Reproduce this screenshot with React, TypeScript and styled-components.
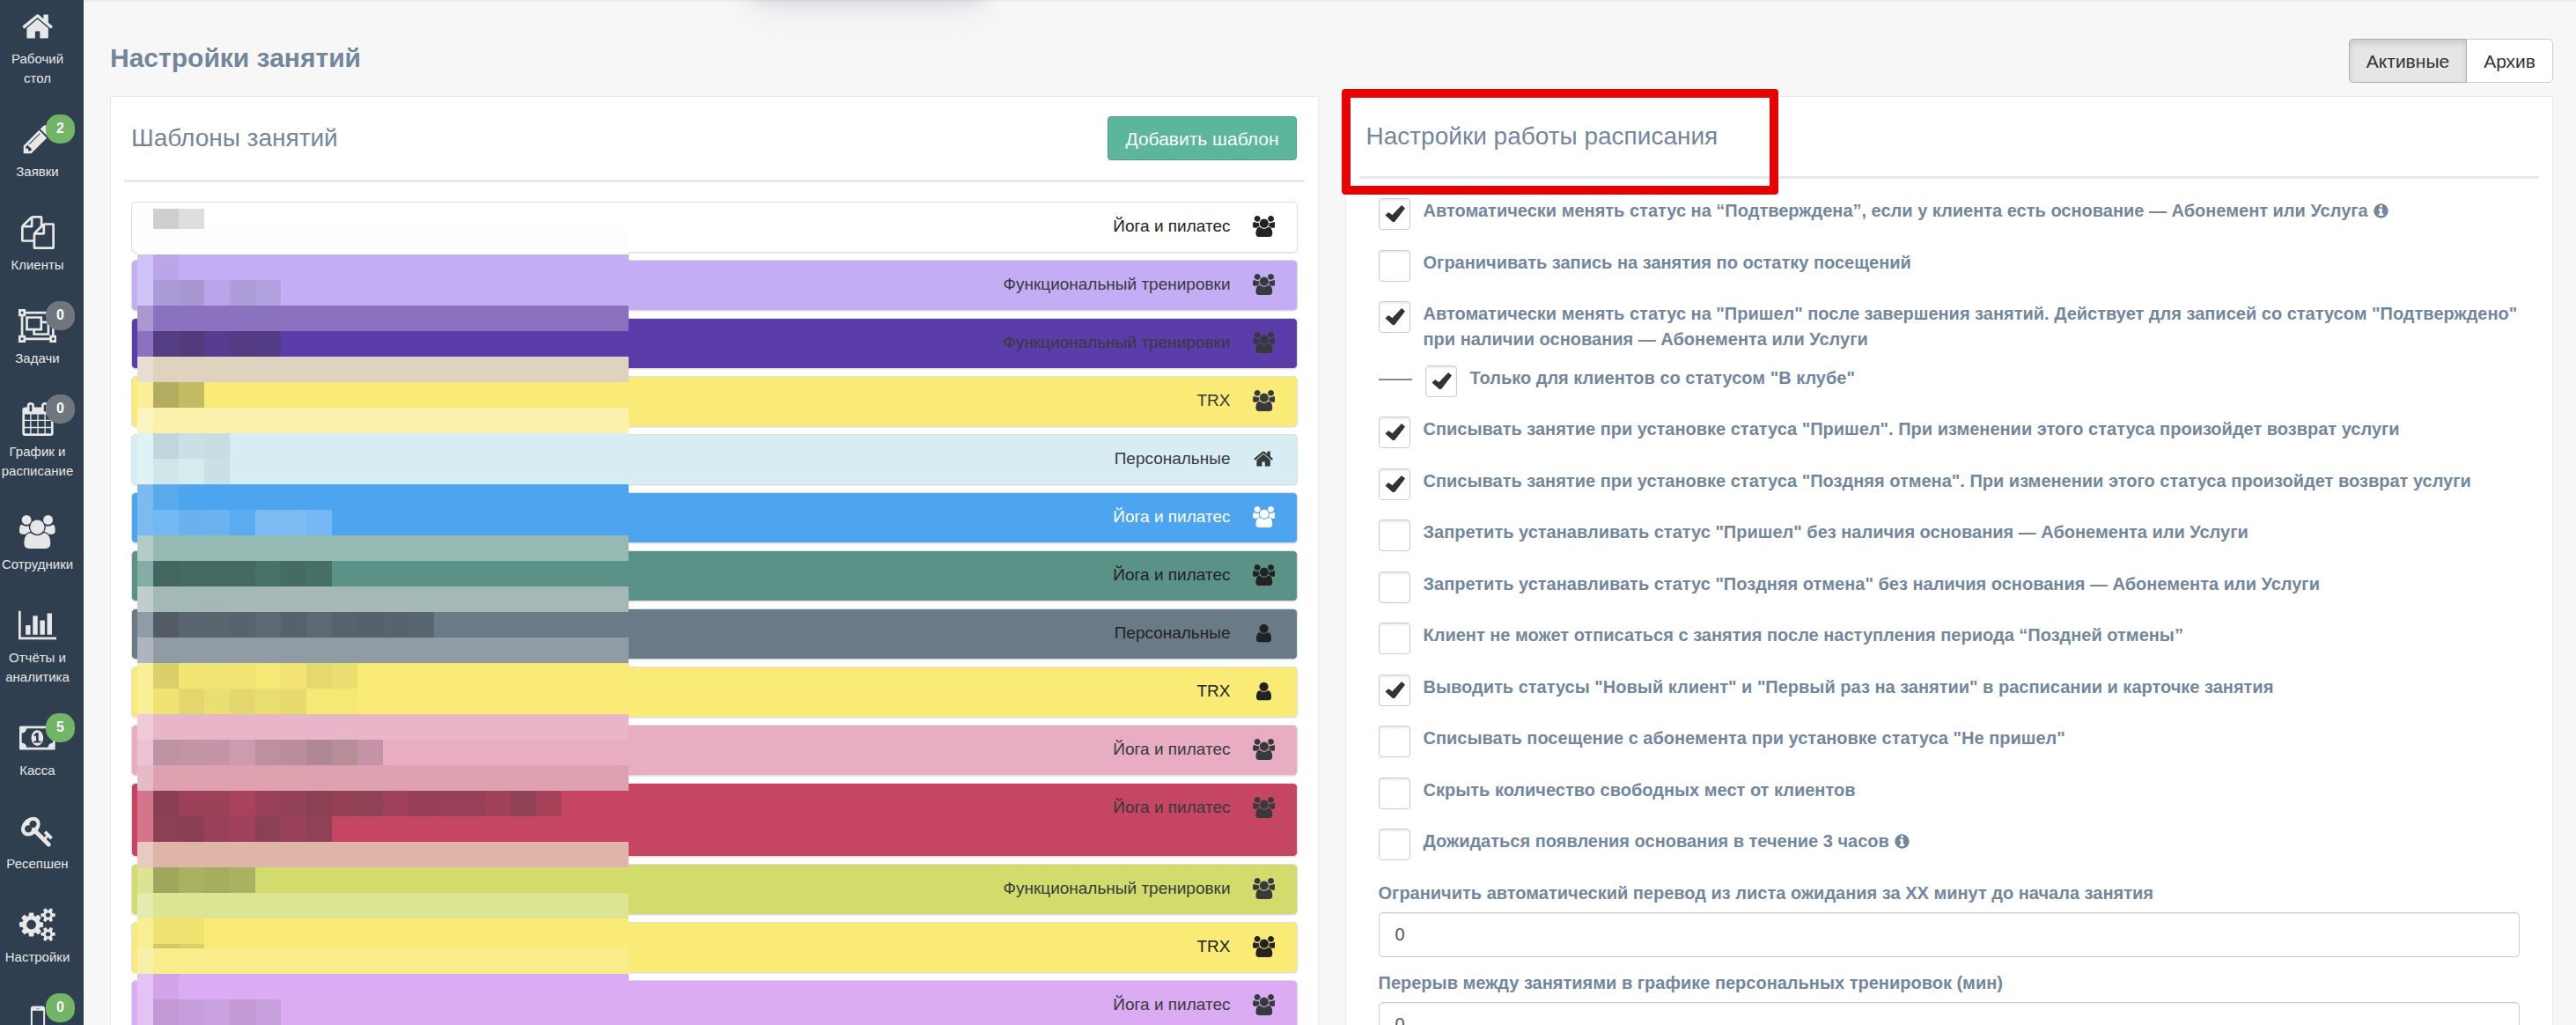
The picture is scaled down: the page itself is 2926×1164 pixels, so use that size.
import React from "react";
import styled, { createGlobalStyle, css } from "styled-components";

/* ---------- icons ---------- */

const glyphs = {
  home: {
    w: 1664,
    d: "M1408 992v480q0 26-19 45t-45 19h-384v-384h-256v384h-384q-26 0-45-19t-19-45v-480q0-1 .5-3t.5-3l575-474 575 474q1 2 1 6zm223-69l-62 74q-8 9-21 11h-3q-13 0-21-7l-692-577-692 577q-12 8-24 7-13-2-21-11l-62-74q-8-10-7-23.5t11-21.5l719-599q32-26 76-26t76 26l244 204v-195q0-14 9-23t23-9h192q14 0 23 9t9 23v408l219 182q10 8 11 21.5t-7 23.5z",
  },
  pencil: {
    w: 1792,
    d: "M491 1536l91-91-235-235-91 91v107h128v128h107zm523-928q0-22-22-22-10 0-17 7l-542 542q-7 7-7 17 0 22 22 22 10 0 17-7l542-542q7-7 7-17zm-54-192l416 416-832 832h-416v-416zm683 96q0 53-37 90l-166 166-416-416 166-165q36-38 90-38 53 0 91 38l235 234q37 39 37 91z",
  },
  files: {
    w: 1792,
    d: "M1696 384q40 0 68 28t28 68v1216q0 40-28 68t-68 28h-960q-40 0-68-28t-28-68v-288h-544q-40 0-68-28t-28-68v-672q0-40 20-88t48-76l408-408q28-28 76-48t88-20h416q40 0 68 28t28 68v328q68-40 128-40h416zm-544 213l-299 299h299v-299zm-640-384l-299 299h299v-299zm196 647l316-316v-416h-384v416q0 40-28 68t-68 28h-416v640h512v-256q0-40 20-88t48-76zm956 804v-1152h-384v416q0 40-28 68t-68 28h-416v640h896z",
  },
  group: {
    w: 2048,
    d: "M0 0h384v128h1280v-128h384v384h-128v1024h128v384h-384v-128h-1280v128h-384v-384h128v-1024h-128zM128 128v128h128v-128zM1792 128v128h128v-128zM128 1536v128h128v-128zM1792 1536v128h128v-128zM384 256v128h-128v1024h128v128h1280v-128h128v-1024h-128v-128zM384 384h896v256h384v768h-896v-256h-384zM512 512v512h640v-512zM1280 768v384h-384v128h640v-512z",
  },
  calendar: {
    w: 1792,
    d: "M192 1664h288v-288h-288v288zm352 0h320v-288h-320v288zm-352-352h288v-320h-288v320zm352 0h320v-320h-320v320zm-352-384h288v-288h-288v288zm736 736h320v-288h-320v288zm-384-736h320v-288h-320v288zm768 736h288v-288h-288v288zm-384-352h320v-320h-320v320zm-352-864v-288q0-13-9.5-22.5t-22.5-9.5h-64q-13 0-22.5 9.5t-9.5 22.5v288q0 13 9.5 22.5t22.5 9.5h64q13 0 22.5-9.5t9.5-22.5zm736 864h288v-320h-288v320zm-384-384h320v-288h-320v288zm384 0h288v-288h-288v288zm32-480v-288q0-13-9.5-22.5t-22.5-9.5h-64q-13 0-22.5 9.5t-9.5 22.5v288q0 13 9.5 22.5t22.5 9.5h64q13 0 22.5-9.5t9.5-22.5zm384-64v1280q0 52-38 90t-90 38h-1408q-52 0-90-38t-38-90v-1280q0-52 38-90t90-38h128v-96q0-66 47-113t113-47h64q66 0 113 47t47 113v96h384v-96q0-66 47-113t113-47h64q66 0 113 47t47 113v96h128q52 0 90 38t38 90z",
  },
  users: {
    w: 1920,
    d: "M593 896q-162 5-265 128H194q-82 0-138-40.5T0 865q0-353 124-353 6 0 43.5 21t97.5 42.5T384 597q67 0 133-23-5 37-5 66 0 139 81 256zm1071 637q0 120-73 189.5t-194 69.5H523q-121 0-194-69.5T256 1533q0-53 3.5-103.5t14-109T300 1212t43-97.5 62-81 85.5-53.5T602 960q10 0 43 21.5t73 48 107 48 135 21.5 135-21.5 107-48 73-48 43-21.5q61 0 111.5 20t85.5 53.5 62 81 43 97.5 26.5 108.5 14 109 3.5 103.5zM640 256q0 106-75 181t-181 75-181-75-75-181 75-181T384 0t181 75 75 181zm704 384q0 159-112.5 271.5T960 1024 688.5 911.5 576 640t112.5-271.5T960 256t271.5 112.5T1344 640zm576 225q0 78-56 118.5t-138 40.5h-134q-103-123-265-128 81-117 81-256 0-29-5-66 66 23 133 23 59 0 119-21.5t97.5-42.5 43.5-21q124 0 124 353zm-128-609q0 106-75 181t-181 75-181-75-75-181 75-181 181-75 181 75 75 181z",
  },
  user: {
    w: 1280,
    d: "M1280 1399q0 109-62.5 187t-150.5 78H213q-88 0-150.5-78T0 1399q0-85 8.5-160.5t31.5-152 58.5-131 94-89T327 832q131 128 313 128t313-128q76 0 134.5 34.5t94 89 58.5 131 31.5 152 8.5 160.5zm-256-887q0 159-112.5 271.5T640 896 368.5 783.5 256 512t112.5-271.5T640 128t271.5 112.5T1024 512z",
  },
  chart: {
    w: 2048,
    d: "M640 896v512h-256v-512h256zm384-512v1024h-256v-1024h256zm1024 1152v128h-2048v-1536h128v1408h1920zm-640-896v768h-256v-768h256zm384-384v1152h-256v-1152h256z",
  },
  money: {
    w: 1920,
    d: "M768 1152h384v-96h-128v-448h-114l-148 137 77 80q42-37 55-57h2v288h-128v96zm512-256q0 70-21 142t-59.5 134-101.5 101-138 39-138-39-101.5-101-59.5-134-21-142 21-142 59.5-134 101.5-101 138-39 138 39 101.5 101 59.5 134 21 142zm512 256v-512q-106 0-181-75t-75-181h-1152q0 106-75 181t-181 75v512q106 0 181 75t75 181h1152q0-106 75-181t181-75zm128-832v1152q0 26-19 45t-45 19h-1792q-26 0-45-19t-19-45v-1152q0-26 19-45t45-19h1792q26 0 45 19t19 45z",
  },
  key: {
    w: 1792,
    d: "M832 512q0-80-56-136t-136-56-136 56-56 136q0 42 19 83-41-19-83-19-80 0-136 56t-56 136 56 136 136 56 136-56 56-136q0-42-19-83 41 19 83 19 80 0 136-56t56-136zm851 704q0 17-49 66t-66 49q-9 0-28.5-16t-36.5-33-38.5-40-24.5-26l-96 96 220 220q28 28 28 68 0 42-39 81t-81 39q-40 0-68-28l-671-671q-176 131-365 131-163 0-265.5-102.5t-102.5-265.5q0-160 95-313t248-248 313-95q163 0 265.5 102.5t102.5 265.5q0 189-131 365l355 355 96-96q-3-3-26-24.5t-40-38.5-33-36.5-16-28.5q0-17 49-66t66-49q13 0 23 10 6 6 46 44.5t82 79.5 86.5 86 73 78 28.5 41z",
  },
  cogs: {
    w: 1920,
    d: "M896 896q0-106-75-181t-181-75-181 75-75 181 75 181 181 75 181-75 75-181zm768 512q0-52-38-90t-90-38-90 38-38 90q0 53 37.5 90.5t90.5 37.5 90.5-37.5 37.5-90.5zm0-1024q0-52-38-90t-90-38-90 38-38 90q0 53 37.5 90.5t90.5 37.5 90.5-37.5 37.5-90.5zm-384 421v185q0 10-7 19.5t-16 10.5l-155 24q-11 35-32 76 34 48 90 115 7 11 7 20 0 12-7 19-23 30-82.5 89.5t-78.5 59.5q-11 0-21-7l-115-90q-37 19-77 31-11 108-23 155-7 24-30 24h-186q-11 0-20-7.5t-10-17.5l-23-153q-34-10-75-31l-118 89q-7 7-20 7-11 0-21-8-144-133-144-160 0-9 7-19 10-14 41-53t47-61q-23-44-35-82l-152-24q-10-1-17-9.5t-7-19.5v-185q0-10 7-19.5t16-10.5l155-24q11-35 32-76-34-48-90-115-7-11-7-20 0-12 7-20 22-30 82-89t79-59q11 0 21 7l115 90q34-18 77-32 11-108 23-154 7-24 30-24h186q11 0 20 7.5t10 17.5l23 153q34 10 75 31l118-89q8-7 20-7 11 0 21 8 144 133 144 160 0 8-7 19-12 16-42 54t-45 60q23 48 34 82l152 23q10 2 17 10.5t7 19.5zm640 533v140q0 16-149 31-12 27-30 52 51 113 51 138 0 4-4 7-122 71-124 71-8 0-46-47t-52-68q-20 2-30 2t-30-2q-14 21-52 68t-46 47q-2 0-124-71-4-3-4-7 0-25 51-138-18-25-30-52-149-15-149-31v-140q0-16 149-31 13-29 30-52-51-113-51-138 0-4 4-7 4-2 35-20t59-34 30-16q8 0 46 46.5t52 67.5q20-2 30-2t30 2q51-71 92-112l6-2q4 0 124 70 4 3 4 7 0 25-51 138 17 23 30 52 149 15 149 31zm0-1024v140q0 16-149 31-12 27-30 52 51 113 51 138 0 4-4 7-122 71-124 71-8 0-46-47t-52-68q-20 2-30 2t-30-2q-14 21-52 68t-46 47q-2 0-124-71-4-3-4-7 0-25 51-138-18-25-30-52-149-15-149-31v-140q0-16 149-31 13-29 30-52-51-113-51-138 0-4 4-7 4-2 35-20t59-34 30-16q8 0 46 46.5t52 67.5q20-2 30-2t30 2q51-71 92-112l6-2q4 0 124 70 4 3 4 7 0 25-51 138 17 23 30 52 149 15 149 31z",
  },
  mobile: {
    w: 1792,
    d: "M976 1408q0-33-23.5-56.5t-56.5-23.5-56.5 23.5-23.5 56.5 23.5 56.5 56.5 23.5 56.5-23.5 23.5-56.5zm208-160v-704q0-13-9.5-22.5t-22.5-9.5h-512q-13 0-22.5 9.5t-9.5 22.5v704q0 13 9.5 22.5t22.5 9.5h512q13 0 22.5-9.5t9.5-22.5zm-192-848q0-16-16-16h-160q-16 0-16 16t16 16h160q16 0 16-16zm288-16v1024q0 52-38 90t-90 38h-512q-52 0-90-38t-38-90v-1024q0-52 38-90t90-38h512q52 0 90 38t38 90z",
  },
  info: {
    w: 1792,
    d: "M1152 1376v-160q0-14-9-23t-23-9h-96v-512q0-14-9-23t-23-9h-320q-14 0-23 9t-9 23v160q0 14 9 23t23 9h96v320h-96q-14 0-23 9t-9 23v160q0 14 9 23t23 9h448q14 0 23-9t9-23zm-128-896v-160q0-14-9-23t-23-9h-192q-14 0-23 9t-9 23v160q0 14 9 23t23 9h192q14 0 23-9t9-23zm640 416q0 209-103 385.5t-279.5 279.5-385.5 103-385.5-103-279.5-279.5-103-385.5 103-385.5 279.5-279.5 385.5-103 385.5 103 279.5 279.5 103 385.5z",
  },
};

type GlyphName = keyof typeof glyphs;

function Icon({ name, size }: { name: GlyphName; size: number }) {
  const g = glyphs[name];
  return (
    <svg height={size} viewBox={`0 0 ${g.w} 1792`} fill="currentColor" fillRule="evenodd" aria-hidden="true">
      <path d={g.d} />
    </svg>
  );
}

/* ---------- page frame ---------- */

const GlobalStyle = createGlobalStyle`
  *, *::before, *::after { box-sizing: border-box; }
  body {
    margin: 0;
    background: #f7f7f7;
    font-family: "Liberation Sans", Arial, sans-serif;
    font-size: 20px;
    line-height: 29px;
    color: #73879c;
  }
  h1, h2, p, ul { margin: 0; padding: 0; }
  ul { list-style: none; }
  button, input { font: inherit; }
`;

const Shell = styled.div`
  display: flex;
  height: 100vh;
  overflow: hidden;
`;

const Sidebar = styled.nav`
  flex: none;
  width: 95px;
  padding: 11px 10px 0 0;
  overflow: hidden;
  background: #2f3f50;
`;

const SideItem = styled.li`
  position: relative;
  margin-bottom: 39px;
`;

const SideLink = styled.a`
  display: flex;
  flex-direction: column;
  align-items: center;
  gap: 7px;
  color: #e7e7e7;
  font-size: 15px;
  line-height: 22px;
  text-align: center;
  text-decoration: none;
  white-space: pre-line;
`;

const Badge = styled.span<{ $muted: boolean }>`
  position: absolute;
  top: -9px;
  right: 0;
  width: 33px;
  height: 33px;
  border-radius: 15px;
  background: ${(p) => (p.$muted ? "#6f767d" : "#73b566")};
  color: #fff;
  font-size: 16px;
  font-weight: 700;
  line-height: 32px;
  text-align: center;
`;

const Main = styled.main`
  position: relative;
  flex: 1;
  min-width: 0;
  padding: 42px 26px 0 30px;
  border-top: 2px solid #ededed;
`;

const TopShade = styled.div`
  position: absolute;
  top: -66px;
  left: 760px;
  width: 260px;
  height: 60px;
  border-radius: 8px;
  box-shadow:
    0 4px 24px rgba(60, 70, 110, 0.16),
    0 12px 50px rgba(60, 70, 110, 0.08);
`;

const PageHead = styled.header`
  display: flex;
  justify-content: space-between;
  align-items: flex-start;
  height: 65px;
`;

const PageTitle = styled.h1`
  font-size: 30px;
  font-weight: 700;
  line-height: 44px;
`;

const Toggle = styled.div`
  display: flex;
`;

const ToggleButton = styled.button<{ $active?: boolean }>`
  height: 50px;
  padding: 0 19px;
  border: 1px solid #ccc;
  border-radius: 0 5px 5px 0;
  background: #fff;
  color: #333;
  font-size: 21px;
  ${(p) =>
    p.$active &&
    css`
      border-color: #adadad;
      border-radius: 5px 0 0 5px;
      background: #e6e6e6;
      box-shadow: inset 0 4px 7px rgba(0, 0, 0, 0.125);
    `}
  & + & {
    border-left: 0;
  }
`;

const Columns = styled.div`
  display: grid;
  grid-template-columns: 1fr 1fr;
  gap: 30px;
`;

const Panel = styled.section`
  position: relative;
  padding: 0 15px 15px;
  border: 1px solid #e6e9ed;
  background: #fff;
`;

const PanelHead = styled.header<{ $tall?: boolean }>`
  display: flex;
  justify-content: space-between;
  align-items: center;
  height: ${(p) => (p.$tall ? 97 : 93)}px;
  padding: 0 9px 0 8px;
  border-bottom: 3px solid #e6e9ed;
`;

const PanelTitle = styled.h2`
  font-size: 28px;
  font-weight: 400;
  line-height: 36px;
`;

const AddButton = styled.button`
  height: 50px;
  padding: 0 19px;
  border: 1px solid #4a9e84;
  border-radius: 4px;
  background: #5bb69b;
  color: #fff;
  font-size: 21px;
`;

/* ---------- templates list ---------- */

const TemplateList = styled.ul`
  position: relative;
  display: flex;
  flex-direction: column;
  gap: 8px;
  padding: 22px 8px 0;
`;

const TemplateRow = styled.li<{ $bg: string; $ink: string; $tall?: boolean }>`
  display: flex;
  justify-content: flex-end;
  align-items: flex-start;
  height: ${(p) => (p.$tall ? 84 : 58)}px;
  padding: 15px 17px 0;
  border: 1px solid #ddd;
  border-radius: 5px;
  background: ${(p) => p.$bg};
  box-shadow: 0 1px 1px rgba(0, 0, 0, 0.08);
  color: ${(p) => p.$ink};
  font-size: 19px;
  line-height: 24px;
`;

const RowIcon = styled.span`
  display: flex;
  justify-content: center;
  width: 40px;
  margin-left: 18px;
`;

const Mosaic = styled.div`
  position: absolute;
  top: 30px;
  left: 15px;
  width: 558px;
`;

const Strip = styled.div<{ $h: number; $bg: string; $edge: string }>`
  display: flex;
  height: ${(p) => p.$h}px;
  border-left: 18px solid ${(p) => p.$edge};
  background: ${(p) => p.$bg};
`;

const Tile = styled.span<{ $c: string }>`
  width: 29px;
  background: ${(p) => p.$c};
`;

/* ---------- settings form ---------- */

const Form = styled.form`
  padding: 22px 22px 0;
`;

const Option = styled.div`
  display: flex;
  align-items: flex-start;
  gap: 15px;
  min-height: 44px;
  margin-bottom: 14px;
  &:nth-child(odd) {
    margin-bottom: 15px;
  }
`;

const SubDash = styled.span`
  flex: none;
  align-self: flex-start;
  width: 38px;
  height: 2px;
  margin-top: 15px;
  background: #888;
`;

const tick =
  "url(\"data:image/svg+xml,%3Csvg xmlns='http://www.w3.org/2000/svg' viewBox='0 0 34 34'%3E%3Cpath fill='%23333' stroke='%23333' stroke-linejoin='round' d='M7 18.5L10 15.5L14.5 18.5L25 7.5L28.5 10.5L17 25.5H15Z'/%3E%3C/svg%3E\")";

const Check = styled.input`
  flex: none;
  appearance: none;
  width: 36px;
  height: 36px;
  margin: 0;
  border: 1px solid #ccc;
  border-radius: 4px;
  background: #fff no-repeat center / 34px 34px;
  box-shadow: inset 0 2px 2px rgba(0, 0, 0, 0.075);
  &:checked {
    background-image: ${tick};
  }
`;

const OptionLabel = styled.label`
  font-size: 20px;
  font-weight: 700;
  svg {
    vertical-align: -3px;
  }
`;

const Field = styled.div`
  display: flex;
  flex-direction: column;
  gap: 7px;
  margin-bottom: 15px;
`;

const FieldLabel = styled.label`
  font-size: 20px;
  font-weight: 700;
`;

const FieldInput = styled.input`
  width: 100%;
  height: 51px;
  padding: 0 18px;
  border: 1px solid #ccc;
  border-radius: 5px;
  background: #fff;
  box-shadow: inset 0 1px 1px rgba(0, 0, 0, 0.075);
  color: #555;
  font-size: 20px;
`;

/* frame drawn over the panel heading */
const Highlight = styled.div`
  position: absolute;
  top: -9px;
  left: -5px;
  width: 496px;
  height: 120px;
  border: 10px solid #e60202;
  border-radius: 4px;
  pointer-events: none;
`;

/* ---------- data ---------- */

const menu: { icon: GlyphName; label: string; badge?: number }[] = [
  { icon: "home", label: "Рабочий\nстол" },
  { icon: "pencil", label: "Заявки", badge: 2 },
  { icon: "files", label: "Клиенты" },
  { icon: "group", label: "Задачи", badge: 0 },
  { icon: "calendar", label: "График и\nрасписание", badge: 0 },
  { icon: "users", label: "Сотрудники" },
  { icon: "chart", label: "Отчёты и\nаналитика" },
  { icon: "money", label: "Касса", badge: 5 },
  { icon: "key", label: "Ресепшен" },
  { icon: "cogs", label: "Настройки" },
  { icon: "mobile", label: "", badge: 0 },
];

const DARK = "#222";
const SOFT = "#373a3c";

const templates: { name: string; icon: GlyphName; bg: string; ink: string; tall?: boolean }[] = [
  { name: "Йога и пилатес", icon: "users", bg: "#fff", ink: DARK },
  { name: "Функциональный тренировки", icon: "users", bg: "#c3aef5", ink: SOFT },
  { name: "Функциональный тренировки", icon: "users", bg: "#5b3daa", ink: SOFT },
  { name: "TRX", icon: "users", bg: "#f9eb76", ink: SOFT },
  { name: "Персональные", icon: "home", bg: "#d7edf3", ink: SOFT },
  { name: "Йога и пилатес", icon: "users", bg: "#4ca5ee", ink: "#fff" },
  { name: "Йога и пилатес", icon: "users", bg: "#5a9288", ink: DARK },
  { name: "Персональные", icon: "user", bg: "#6b7a87", ink: DARK },
  { name: "TRX", icon: "user", bg: "#f9eb76", ink: DARK },
  { name: "Йога и пилатес", icon: "users", bg: "#e9adc3", ink: SOFT },
  { name: "Йога и пилатес", icon: "users", bg: "#c54562", ink: SOFT, tall: true },
  { name: "Функциональный тренировки", icon: "users", bg: "#d2dc6c", ink: SOFT },
  { name: "TRX", icon: "users", bg: "#f9eb76", ink: DARK },
  { name: "Йога и пилатес", icon: "users", bg: "#dbacf4", ink: SOFT },
];

/* strips: height, edge colour, base colour, tiles */
const strips: [number, string, string, string[]][] = [
  [23, "#fdfdfd", "#ffffff", ["#cfcfcf", "#dedede"]],
  [29, "#fdfdfd", "#fdfdfd", []],
  [29, "#cfc2f7", "#c3aef5", ["#baa6e8"]],
  [29, "#cfc2f7", "#c3aef5", ["#ab9cd8", "#a798d2", "#b9a6e8", "#ae9ddb", "#b0a0de"]],
  [29, "#a999d0", "#8a72c0", []],
  [29, "#8a72bf", "#5b3daa", ["#533d83", "#513b7d", "#563d93", "#523b80", "#533c86"]],
  [29, "#e7ded1", "#dfd3c0", []],
  [29, "#faee96", "#f9eb76", ["#b4ac60", "#c4bb64"]],
  [29, "#fbf3c0", "#fbf0ac", []],
  [29, "#dff2f6", "#d7edf3", ["#c1d6dc", "#cbdfe4", "#c9dde3"]],
  [29, "#dff2f6", "#d7edf3", ["#cfe7ea", "#d5ecef", "#cbe0e5"]],
  [29, "#7cbbf0", "#4ca5ee", ["#59a9ed"]],
  [29, "#7cbbf0", "#4ca5ee", ["#72b8f2", "#69b2f0", "#6ab3ef", "#5aabf0", "#7bbcf3", "#7bbcf3", "#75b8f3"]],
  [29, "#b3ccc8", "#95b9b3", []],
  [29, "#84ada7", "#5a9288", ["#43665f", "#446960", "#446960", "#446960", "#487168", "#446c63", "#467067"]],
  [29, "#bfcdcc", "#a4b8b6", []],
  [29, "#909ca5", "#6b7a87", ["#535c65", "#5a666f", "#5a666e", "#58646d", "#5c6972", "#56626b", "#5c6972", "#58646d", "#55616a", "#58646d", "#5a666f"]],
  [29, "#aeb5be", "#909ca4", []],
  [29, "#faef99", "#f9eb76", ["#dacf6b", "#f2e574", "#f1e574", "#f2e573", "#f5e874", "#f2e374", "#e5d96e", "#eade70"]],
  [29, "#faef99", "#f9eb76", ["#f0e372", "#e2d66c", "#eadf72", "#e3d76d", "#e9df70", "#e6da6e", "#f5e875", "#f5e875"]],
  [29, "#efcbd8", "#e9b6c9", []],
  [29, "#edc1d4", "#e9adc3", ["#be93a4", "#c393a6", "#c694a9", "#cd9bb0", "#bd90a1", "#ba8d9e", "#b08795", "#b78d99", "#c593a8"]],
  [29, "#e6bac6", "#dfa1af", []],
  [29, "#d4758c", "#c54562", ["#8a4054", "#9c4159", "#9b4158", "#a9425d", "#984158", "#934156", "#8b4054", "#924253", "#8f4156", "#9f415a", "#943f56", "#974158", "#974158", "#a0425a", "#8f4156", "#a6435b"]],
  [29, "#d4758c", "#c54562", ["#8c4054", "#8a4054", "#994158", "#9f415a", "#8c4055", "#994158", "#8f4156"]],
  [29, "#e7cac0", "#dfb5aa", []],
  [29, "#dde491", "#d2dc6c", ["#a0a65e", "#aab262", "#a6ad5e", "#aab361"]],
  [29, "#e5eab0", "#dde492", []],
  [29, "#f9ee94", "#f9eb76", ["#f0e372", "#f0e372"]],
  [5, "#f9ee94", "#f9eb76", ["#d3c868", "#dacf69"]],
  [29, "#f8efaa", "#f9ed8b", []],
  [29, "#e3c2f4", "#dbacf4", ["#d3a5e8"]],
  [29, "#e3c2f4", "#dbacf4", ["#c299d5", "#c79edc", "#cba2e0", "#c399d6", "#c9a0de"]],
];

const options: { text: string; on?: boolean; sub?: boolean; info?: boolean }[] = [
  { text: "Автоматически менять статус на “Подтверждена”, если у клиента есть основание — Абонемент или Услуга", on: true, info: true },
  { text: "Ограничивать запись на занятия по остатку посещений" },
  { text: 'Автоматически менять статус на "Пришел" после завершения занятий. Действует для записей со статусом "Подтверждено" при наличии основания — Абонемента или Услуги', on: true },
  { text: 'Только для клиентов со статусом "В клубе"', on: true, sub: true },
  { text: 'Списывать занятие при установке статуса "Пришел". При изменении этого статуса произойдет возврат услуги', on: true },
  { text: 'Списывать занятие при установке статуса "Поздняя отмена". При изменении этого статуса произойдет возврат услуги', on: true },
  { text: 'Запретить устанавливать статус "Пришел" без наличия основания — Абонемента или Услуги' },
  { text: 'Запретить устанавливать статус "Поздняя отмена" без наличия основания — Абонемента или Услуги' },
  { text: "Клиент не может отписаться с занятия после наступления периода “Поздней отмены”" },
  { text: 'Выводить статусы "Новый клиент" и "Первый раз на занятии" в расписании и карточке занятия', on: true },
  { text: 'Списывать посещение с абонемента при установке статуса "Не пришел"' },
  { text: "Скрыть количество свободных мест от клиентов" },
  { text: "Дожидаться появления основания в течение 3 часов", info: true },
];

const fields = [
  { id: "waitlist-limit", label: "Ограничить автоматический перевод из листа ожидания за XX минут до начала занятия" },
  { id: "personal-break", label: "Перерыв между занятиями в графике персональных тренировок (мин)" },
];

export default function App() {
  return (
    <>
      <GlobalStyle />
      <Shell>
        <Sidebar>
          <ul>
            {menu.map((m) => (
              <SideItem key={m.icon}>
                <SideLink href="#">
                  <Icon name={m.icon} size={38} />
                  {m.label && <span>{m.label}</span>}
                </SideLink>
                {m.badge !== undefined && <Badge $muted={m.badge === 0 && m.icon !== "mobile"}>{m.badge}</Badge>}
              </SideItem>
            ))}
          </ul>
        </Sidebar>
        <Main>
          <TopShade />
          <PageHead>
            <PageTitle>Настройки занятий</PageTitle>
            <Toggle>
              <ToggleButton type="button" $active>
                Активные
              </ToggleButton>
              <ToggleButton type="button">Архив</ToggleButton>
            </Toggle>
          </PageHead>
          <Columns>
            <Panel>
              <PanelHead $tall>
                <PanelTitle>Шаблоны занятий</PanelTitle>
                <AddButton type="button">Добавить шаблон</AddButton>
              </PanelHead>
              <TemplateList>
                {templates.map((t, i) => (
                  <TemplateRow key={i} $bg={t.bg} $ink={t.ink} $tall={t.tall}>
                    {t.name}
                    <RowIcon>
                      <Icon name={t.icon} size={24} />
                    </RowIcon>
                  </TemplateRow>
                ))}
                <Mosaic as="li" aria-hidden="true">
                  {strips.map(([h, edge, bg, tiles], i) => (
                    <Strip key={i} $h={h} $edge={edge} $bg={bg}>
                      {tiles.map((c, j) => (
                        <Tile key={j} $c={c} />
                      ))}
                    </Strip>
                  ))}
                </Mosaic>
              </TemplateList>
            </Panel>
            <Panel>
              <PanelHead>
                <PanelTitle>Настройки работы расписания</PanelTitle>
              </PanelHead>
              <Form>
                {options.map((o, i) => (
                  <Option key={i}>
                    {o.sub && <SubDash />}
                    <Check type="checkbox" id={`option-${i}`} defaultChecked={o.on} />
                    <OptionLabel htmlFor={`option-${i}`}>
                      {o.text}
                      {o.info && (
                        <>
                          {" "}
                          <Icon name="info" size={19} />
                        </>
                      )}
                    </OptionLabel>
                  </Option>
                ))}
                {fields.map((f) => (
                  <Field key={f.id}>
                    <FieldLabel htmlFor={f.id}>{f.label}</FieldLabel>
                    <FieldInput type="text" id={f.id} defaultValue="0" />
                  </Field>
                ))}
              </Form>
              <Highlight />
            </Panel>
          </Columns>
        </Main>
      </Shell>
    </>
  );
}
